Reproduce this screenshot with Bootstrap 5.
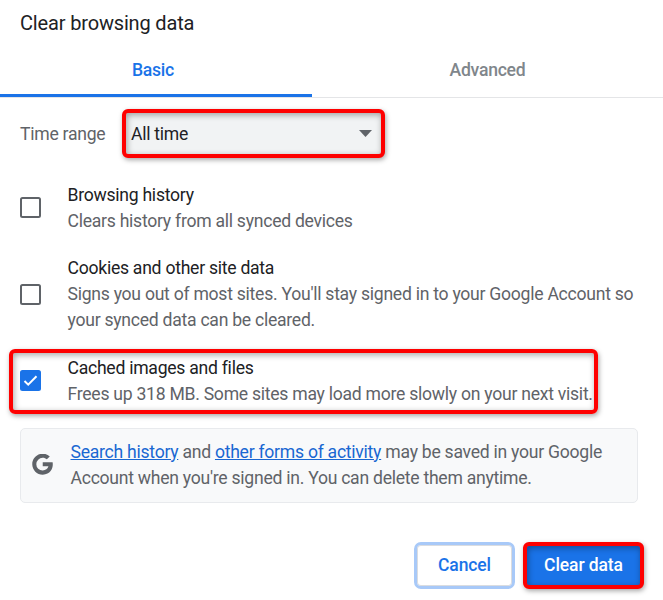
<!DOCTYPE html>
<html lang="en">
<head>
<meta charset="utf-8">
<meta name="viewport" content="width=device-width, initial-scale=1">
<title>Clear browsing data</title>
<link href="https://cdn.jsdelivr.net/npm/bootstrap@5.3.0/dist/css/bootstrap.min.css" rel="stylesheet">
<style>
body{font-family:Roboto,"Liberation Sans",sans-serif;font-size:17.6px;letter-spacing:-.265px;line-height:26px;color:#5f6368;background:#fff;overflow:hidden}
.dialog-box{width:663px;height:600px}
.dialog-title{font-size:20px;letter-spacing:-.16px;line-height:26px;font-weight:400;color:#202124;padding:10px 20px 0;height:43px}
.tab-strip{height:55px;border-bottom:1px solid #e4e5e7;flex-wrap:nowrap}
.tab-strip .nav-link{height:54px;padding:14px 0 0;text-align:center;font-weight:500;color:#80868b;border-radius:0}
.tab-strip .tab-basic{width:312px;padding-right:6px;color:#1a73e8;border-bottom:3px solid #1a73e8}
.tab-strip .tab-adv{width:351px}
.marked{border:4px solid #fe0000;border-radius:6px;box-shadow:1px 2px 5px rgba(0,0,0,.35),inset 1px 2px 6px rgba(0,0,0,.35)}
.range-row{margin:11px 0 0 20px;height:49px}
.range-label{width:101.500px}
.range-select{width:263px;height:49px;background:#f1f3f4;color:#202124;padding:0 9px 0 5.500px}
.opt{padding-left:20px}
.opt-box{width:21px;height:21px;border:2px solid #5f6368;border-radius:2.5px;margin-right:26.5px;flex:none}
.opt-box.on{background:#1a73e8;border:0}
.opt-name{color:#202124}
.opt-history{margin-top:24px}
.opt-history .opt-box{margin-bottom:1px}
.opt-cookies{margin-top:21px}
.opt-cache{margin:16px 0 0 9px;width:589px;height:65px;padding:0 0 2px 7px}
.info{margin:14px 25px 0 20px;height:75px;border:1px solid #e8eaed;border-radius:5px;background:#f8f9fa;padding:0 0 2px 11px}
.info a{color:#1967d2}
.info svg{margin-right:16.500px}
.act{height:47px;padding:0;font-size:17.5px;letter-spacing:-.1px;font-weight:500;line-height:39px}
.act-cancel{width:101px;border:3px solid #a8c9f8;border-radius:7px;color:#1a73e8;background:#fff;box-shadow:inset 0 0 0 1px #dadce0}
.act-clear{width:121px;color:#fff;background:#1a73e8}
.act-row{margin:38.500px 19px 0 0;gap:8px}
</style>
<script src="https://cdn.jsdelivr.net/npm/bootstrap@5.3.0/dist/js/bootstrap.bundle.min.js"></script>
</head>
<body>
<main class="dialog-box">
  <h1 class="dialog-title m-0">Clear browsing data</h1>
  <nav class="nav tab-strip">
    <a class="nav-link tab-basic" href="#">Basic</a>
    <a class="nav-link tab-adv" href="#">Advanced</a>
  </nav>
  <div class="range-row d-flex align-items-center">
    <span class="range-label">Time range</span>
    <div class="range-select marked d-flex align-items-center justify-content-between">
      <span>All time</span>
      <svg width="13" height="7" viewBox="0 0 13 7"><path d="M0 0h13L6.500 7z" fill="#5f6368"/></svg>
    </div>
  </div>
  <div class="opt opt-history d-flex align-items-center">
    <span class="opt-box"></span>
    <div><div class="opt-name">Browsing history</div><div class="opt-desc">Clears history from all synced devices</div></div>
  </div>
  <div class="opt opt-cookies d-flex align-items-center">
    <span class="opt-box"></span>
    <div><div class="opt-name">Cookies and other site data</div><div class="opt-desc">Signs you out of most sites. You'll stay signed in to your Google Account so<br>your synced data can be cleared.</div></div>
  </div>
  <div class="opt opt-cache marked d-flex align-items-center">
    <span class="opt-box on d-flex"><svg width="21" height="21" viewBox="0 0 21 21"><path d="M4.500 11l3.700 3.700L16.500 6.300" fill="none" stroke="#fff" stroke-width="2"/></svg></span>
    <div class="text-nowrap"><div class="opt-name">Cached images and files</div><div class="opt-desc">Frees up 318 MB. Some sites may load more slowly on your next visit.</div></div>
  </div>
  <div class="info d-flex align-items-center">
    <svg width="22" height="22" viewBox="2.300 2.300 21 21" fill="#5f6368"><path d="M12.545 10.239v3.821h5.445c-.712 2.315-2.647 3.972-5.445 3.972a6.033 6.033 0 1 1 0-12.064c1.498 0 2.866.549 3.921 1.453l2.814-2.814A9.969 9.969 0 0 0 12.545 2C7.021 2 2.543 6.477 2.543 12s4.478 10 10.002 10c8.396 0 10.249-7.850 9.426-11.748z"/></svg>
    <div class="text-nowrap"><a href="#">Search history</a> and <a href="#">other forms of activity</a> may be saved in your Google<br>Account when you're signed in. You can delete them anytime.</div>
  </div>
  <div class="act-row d-flex justify-content-end">
    <button class="btn act act-cancel">Cancel</button>
    <button class="btn act act-clear marked">Clear data</button>
  </div>
</main>
</body>
</html>
